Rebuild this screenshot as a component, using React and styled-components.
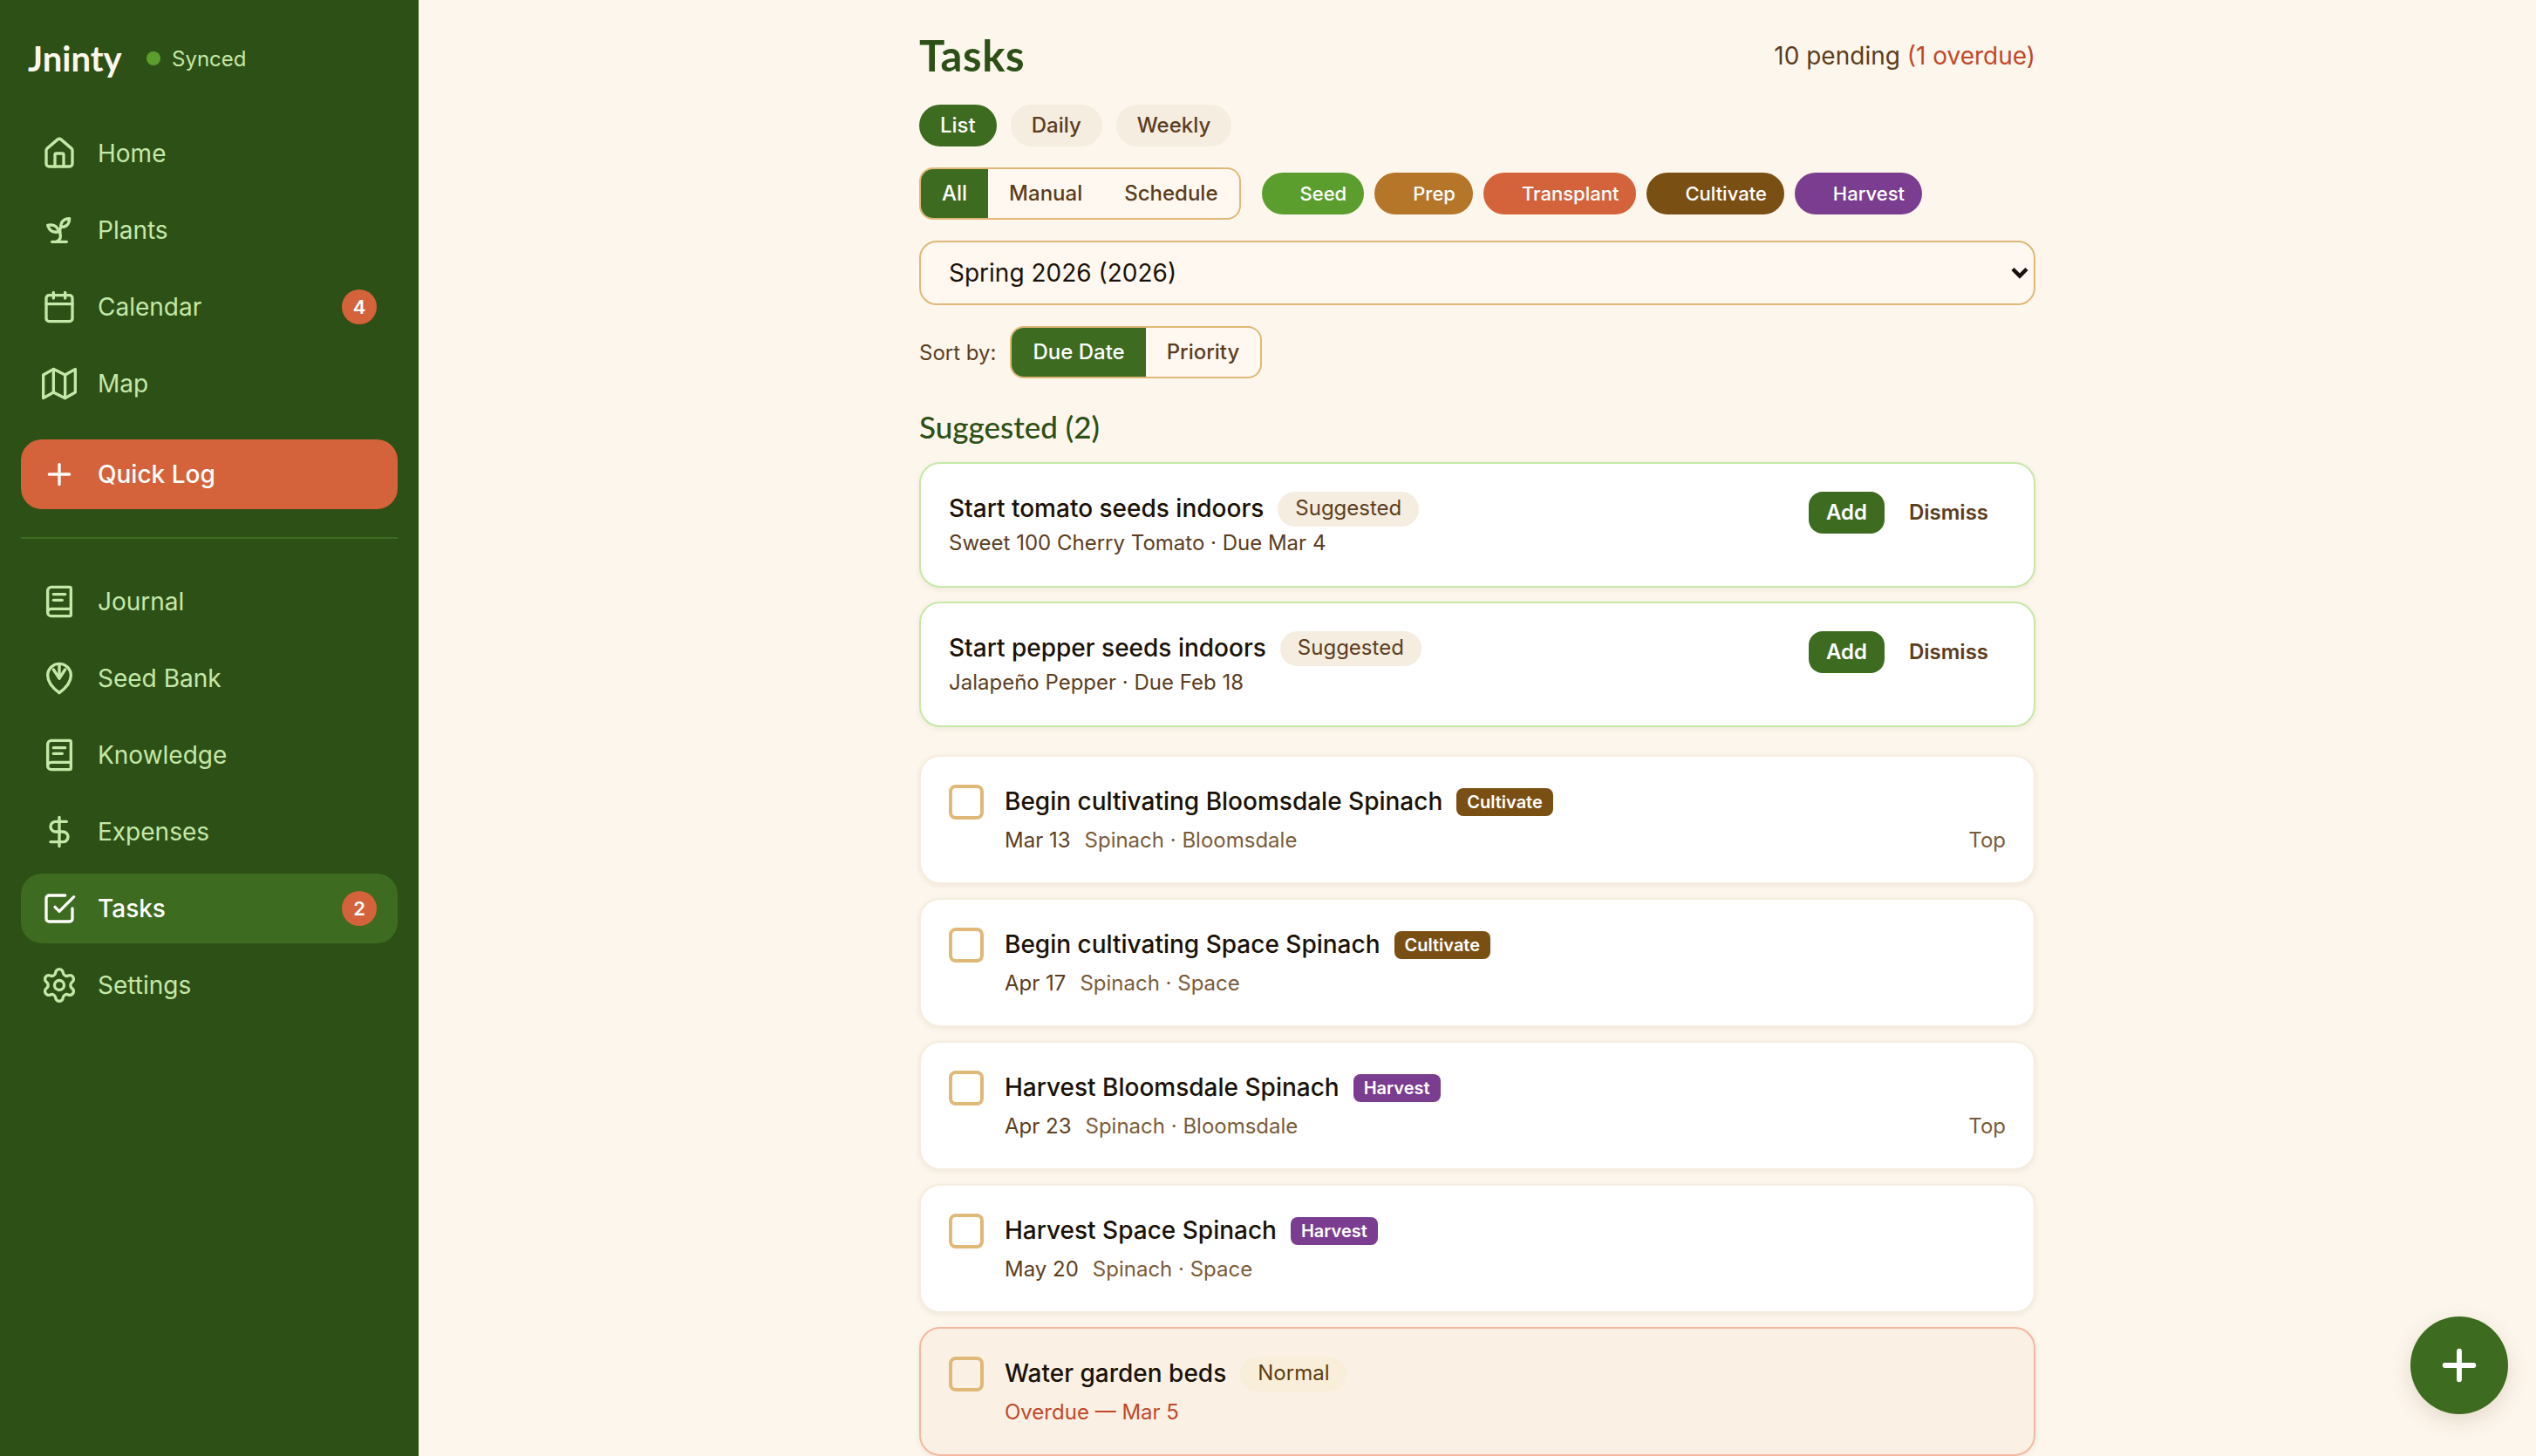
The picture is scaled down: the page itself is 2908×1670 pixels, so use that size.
import React from "react";
import styled, { createGlobalStyle } from "styled-components";
import { House, Calendar, Plus, DollarSign, Settings } from "lucide-react";

const Global = createGlobalStyle`
  html, body { margin: 0; padding: 0; height: 100%; overflow: hidden; }
  body { background: #fdf6ec; font-family: Inter, "Liberation Sans", sans-serif; color: #1a1208; }
  #root { height: 100%; }
  * { box-sizing: border-box; }
`;

const HEADING = `Lato, "Noto Sans", sans-serif`;

const Shell = styled.div`
  display: flex;
  height: 1670px;
  overflow: hidden;
`;
const Sidebar = styled.aside`
  width: 480px;
  flex: none;
  background: #2d5016;
  padding: 0 24px;
  display: flex;
  flex-direction: column;
`;
const Brand = styled.div`
  height: 136px;
  display: flex;
  align-items: center;
  padding: 0 0 2px 8px;
`;
const Logo = styled.div`
  font-family: ${HEADING};
  font-weight: 700;
  font-size: 40px;
  color: #fdf6ec;
  width: 136px;
`;
const SyncDot = styled.span`
  width: 16px;
  height: 16px;
  border-radius: 50%;
  background: #5c9e2e;
  margin-right: 13px;
`;
const SyncText = styled.span`
  font-size: 24px;
  color: #c5e8a8;
`;
const Nav = styled.nav`
  display: flex;
  flex-direction: column;
  gap: 8px;
`;
const NavItem = styled.a`
  height: 80px;
  border-radius: 24px;
  padding: 0 24px;
  display: flex;
  align-items: center;
  gap: 24px;
  font-size: 28px;
  font-weight: ${(p) => (p.$active ? 500 : 400)};
  color: ${(p) => (p.$active ? "#ffffff" : "#c5e8a8")};
  background: ${(p) => (p.$active ? "#3d6b1f" : "transparent")};
  svg { flex: none; }
`;
const QuickLog = styled(NavItem)`
  margin-top: 16px;
  background: #d4623a;
  color: #ffffff;
  font-weight: 500;
`;
const Label = styled.span`
  flex: 1;
`;
const Badge = styled.span`
  width: 40px;
  height: 40px;
  border-radius: 50%;
  background: #d4623a;
  color: #fff;
  font-size: 22px;
  font-weight: 600;
  display: flex;
  align-items: center;
  justify-content: center;
`;
const Divider = styled.hr`
  border: 0;
  height: 2px;
  background: #3d6b1f;
  margin: 32px 0;
`;
const Gear = styled(Settings)`
  margin: 0 -2px;
`;
const Main = styled.main`
  flex: 1;
  display: flex;
  justify-content: center;
  overflow: hidden;
`;
const Column = styled.div`
  width: 1280px;
  padding-top: 32px;
`;
const TitleRow = styled.header`
  display: flex;
  justify-content: space-between;
  align-items: center;
  height: 64px;
  margin-bottom: 24px;
`;
const Title = styled.h1`
  margin: 0 0 2px;
  font-family: ${HEADING};
  font-size: 49px;
  letter-spacing: 0.6px;
  font-weight: 700;
  color: #2d5016;
`;
const Pending = styled.div`
  font-size: 28px;
  color: #5c3d1e;
`;
const Overdue = styled.span`
  color: #c0492b;
`;
const ViewTabs = styled.div`
  display: flex;
  gap: 16px;
  margin-bottom: 24px;
`;
const ViewTab = styled.button`
  height: 48px;
  padding: 0 24px 2px;
  border: 0;
  border-radius: 24px;
  font: 500 24px Inter, sans-serif;
  background: ${(p) => (p.$active ? "#3d6b1f" : "#f5ede0")};
  color: ${(p) => (p.$active ? "#fff" : "#5c3d1e")};
`;
const FilterRow = styled.div`
  display: flex;
  align-items: center;
  gap: 24px;
  margin-bottom: 24px;
`;
const Segments = styled.div`
  display: flex;
  height: 60px;
  border: 2px solid #e0b878;
  border-radius: 16px;
  overflow: hidden;
  background: #fff8f0;
`;
const Segment = styled.button`
  padding: 0 24px 2px;
  border: 0;
  font: 500 24px Inter, sans-serif;
  background: ${(p) => (p.$active ? "#3d6b1f" : "transparent")};
  color: ${(p) => (p.$active ? "#fff" : "#5c3d1e")};
`;
const Stages = styled.div`
  display: flex;
  gap: 12px;
`;
const Stage = styled.button`
  height: 48px;
  padding: 0 20px;
  border: 0;
  border-radius: 24px;
  display: flex;
  align-items: center;
  gap: 12px;
  font: 500 22px Inter, sans-serif;
  color: #fff;
  background: ${(p) => p.$color};
`;
const StageDot = styled.span`
  width: 12px;
  height: 12px;
  border-radius: 50%;
  background: ${(p) => p.$color};
`;
const SelectWrap = styled.div`
  position: relative;
  margin-bottom: 24px;
`;
const SeasonSelect = styled.select`
  appearance: none;
  display: block;
  width: 100%;
  height: 74px;
  padding: 0 32px;
  border: 2px solid #e0b878;
  border-radius: 20px;
  background: #fff8f0;
  color: #1a1208;
  font: 400 28px Inter, sans-serif;
`;
const Chevron = styled.svg`
  position: absolute;
  right: 8px;
  top: 30px;
  pointer-events: none;
`;
const SortRow = styled.div`
  display: flex;
  align-items: center;
  gap: 16px;
  font-size: 24px;
  color: #5c3d1e;
  margin-bottom: 32px;
`;
const SectionTitle = styled.h2`
  margin: 0 0 16px;
  height: 48px;
  line-height: 46px;
  font-family: ${HEADING};
  font-weight: 500;
  font-size: 35px;
  color: #2d5016;
`;
const CardList = styled.div`
  display: flex;
  flex-direction: column;
  gap: 16px;
  margin-bottom: 32px;
`;
const Card = styled.div`
  display: flex;
  align-items: flex-start;
  gap: 24px;
  padding: 32px;
  border-radius: 24px;
  border: 2px solid ${(p) => p.$border || "#f5ede0"};
  background: ${(p) => p.$bg || "#ffffff"};
  box-shadow: 0 2px 6px rgba(92, 61, 30, 0.08);
`;
const CardBody = styled.div`
  flex: 1;
  min-width: 0;
`;
const TitleLine = styled.div`
  display: flex;
  align-items: center;
  gap: 16px;
  height: 40px;
`;
const CardTitle = styled.span`
  padding-bottom: 2px;
  font-size: 28px;
  font-weight: 500;
  color: #1a1208;
`;
const Chip = styled.span`
  height: 40px;
  line-height: 38px;
  padding: 0 20px;
  border-radius: 20px;
  font-size: 24px;
  background: ${(p) => p.$bg || "#f5ede0"};
  color: ${(p) => p.$color || "#5c3d1e"};
`;
const StageTag = styled.span`
  height: 32px;
  line-height: 32px;
  padding: 0 12px;
  border-radius: 8px;
  font-size: 20px;
  font-weight: 600;
  color: #fff;
  background: ${(p) => p.$color};
`;
const SuggestMeta = styled.div`
  margin-top: 4px;
  height: 32px;
  line-height: 30px;
  font-size: 24px;
  color: #5c3d1e;
`;
const Actions = styled.div`
  display: flex;
  gap: 8px;
`;
const AddButton = styled.button`
  height: 48px;
  padding: 0 20px 2px;
  border: 0;
  border-radius: 16px;
  background: #3d6b1f;
  color: #fff;
  font: 600 24px Inter, sans-serif;
`;
const DismissButton = styled.button`
  height: 48px;
  padding: 0 20px 2px;
  border: 0;
  background: transparent;
  color: #5c3d1e;
  font: 600 24px Inter, sans-serif;
`;
const Checkbox = styled.span`
  flex: none;
  width: 40px;
  height: 40px;
  border: 4px solid #e0b878;
  border-radius: 8px;
`;
const TaskMeta = styled.div`
  margin-top: 8px;
  height: 32px;
  padding-bottom: 2px;
  display: flex;
  align-items: center;
  gap: 16px;
  font-size: 24px;
  color: #5c3d1e;
`;
const Crop = styled.span`
  color: #7a5c3a;
`;
const Location = styled.span`
  margin-left: auto;
  color: #7a5c3a;
`;
const OverdueText = styled.span`
  color: #c0492b;
`;
const Fab = styled.button`
  position: fixed;
  right: 32px;
  bottom: 48px;
  width: 112px;
  height: 112px;
  border: 0;
  border-radius: 50%;
  background: #3d6b1f;
  color: #fff;
  display: flex;
  align-items: center;
  justify-content: center;
  box-shadow: 0 8px 24px rgba(92, 61, 30, 0.15);
`;

const Svg = ({ children }) => (
  <svg width="40" height="40" viewBox="0 0 24 24" fill="none" stroke="currentColor" strokeWidth="2" strokeLinecap="round" strokeLinejoin="round">
    {children}
  </svg>
);
const Sprout = () => (
  <Svg>
    <path d="M7 20h10" />
    <path d="M10 20c5.5-2.5.8-6.4 3-10" />
    <path d="M9.5 9.4c1.1.8 1.8 2.2 2.3 3.7-2 .4-3.5.4-4.8-.3-1.2-.6-2.3-1.9-3-4.2 2.8-.5 4.4 0 5.5.8z" />
    <path d="M14.1 6a7 7 0 0 0-1.1 4c1.9-.1 3.3-.6 4.3-1.4 1-1 1.6-2.3 1.7-4.6-2.7.1-4 1-4.9 2z" />
  </Svg>
);
const MapIcon = () => (
  <Svg>
    <polygon points="1 6 1 22 8 18 16 22 23 18 23 2 16 6 8 2 1 6" />
    <line x1="8" y1="2" x2="8" y2="18" />
    <line x1="16" y1="6" x2="16" y2="22" />
  </Svg>
);
const Book = () => (
  <Svg>
    <path d="M4 19.5v-15A2.5 2.5 0 0 1 6.5 2H19a1 1 0 0 1 1 1v18a1 1 0 0 1-1 1H6.5a2.5 2.5 0 0 1 0-5H20" />
    <path d="M8 7h8" />
    <path d="M8 11h6" />
  </Svg>
);
const Seed = () => (
  <Svg>
    <path d="M12 22C8 19 4 15 4 10a8 8 0 0 1 16 0c0 5-4 9-8 12z" />
    <path d="M12 2v10" />
    <path d="m8 6 4 6 4-6" />
  </Svg>
);
const Check = () => (
  <Svg>
    <polyline points="9 11 12 14 22 4" />
    <path d="M21 12v7a2 2 0 0 1-2 2H5a2 2 0 0 1-2-2V5a2 2 0 0 1 2-2h11" />
  </Svg>
);

const C = { Seed: "#5c9e2e", Prep: "#b5762a", Transplant: "#d4623a", Cultivate: "#7a4f14", Harvest: "#7b3d8f" };

const suggested = [
  { title: "Start tomato seeds indoors", meta: "Sweet 100 Cherry Tomato · Due Mar 4" },
  { title: "Start pepper seeds indoors", meta: "Jalapeño Pepper · Due Feb 18" },
];
const tasks = [
  { title: "Begin cultivating Bloomsdale Spinach", stage: "Cultivate", date: "Mar 13", crop: "Spinach · Bloomsdale", loc: "Top" },
  { title: "Begin cultivating Space Spinach", stage: "Cultivate", date: "Apr 17", crop: "Spinach · Space" },
  { title: "Harvest Bloomsdale Spinach", stage: "Harvest", date: "Apr 23", crop: "Spinach · Bloomsdale", loc: "Top" },
  { title: "Harvest Space Spinach", stage: "Harvest", date: "May 20", crop: "Spinach · Space" },
];

export default function App() {
  return (
    <Shell>
      <Global />
      <Sidebar>
        <Brand>
          <Logo>Jninty</Logo>
          <SyncDot />
          <SyncText>Synced</SyncText>
        </Brand>
        <Nav>
          <NavItem><House size={40} /><Label>Home</Label></NavItem>
          <NavItem><Sprout /><Label>Plants</Label></NavItem>
          <NavItem><Calendar size={40} /><Label>Calendar</Label><Badge>4</Badge></NavItem>
          <NavItem><MapIcon /><Label>Map</Label></NavItem>
          <QuickLog><Plus size={40} /><Label>Quick Log</Label></QuickLog>
        </Nav>
        <Divider />
        <Nav>
          <NavItem><Book /><Label>Journal</Label></NavItem>
          <NavItem><Seed /><Label>Seed Bank</Label></NavItem>
          <NavItem><Book /><Label>Knowledge</Label></NavItem>
          <NavItem><DollarSign size={40} /><Label>Expenses</Label></NavItem>
          <NavItem $active><Check /><Label>Tasks</Label><Badge>2</Badge></NavItem>
          <NavItem><Gear size={44} strokeWidth={1.82} /><Label>Settings</Label></NavItem>
        </Nav>
      </Sidebar>
      <Main>
        <Column>
          <TitleRow>
            <Title>Tasks</Title>
            <Pending>10 pending <Overdue>(1 overdue)</Overdue></Pending>
          </TitleRow>
          <ViewTabs>
            <ViewTab $active>List</ViewTab>
            <ViewTab>Daily</ViewTab>
            <ViewTab>Weekly</ViewTab>
          </ViewTabs>
          <FilterRow>
            <Segments>
              <Segment $active>All</Segment>
              <Segment>Manual</Segment>
              <Segment>Schedule</Segment>
            </Segments>
            <Stages>
              {Object.entries(C).map(([name, color]) => (
                <Stage key={name} $color={color}><StageDot $color={color} />{name}</Stage>
              ))}
            </Stages>
          </FilterRow>
          <SelectWrap>
            <SeasonSelect defaultValue="s">
              <option value="s">Spring 2026 (2026)</option>
            </SeasonSelect>
            <Chevron width="20" height="14" viewBox="0 0 20 14" fill="none" stroke="#1a1208" strokeWidth="4.5">
              <path d="M2 2.5 10 10.5 18 2.5" />
            </Chevron>
          </SelectWrap>
          <SortRow>
            Sort by:
            <Segments>
              <Segment $active>Due Date</Segment>
              <Segment>Priority</Segment>
            </Segments>
          </SortRow>
          <SectionTitle>Suggested (2)</SectionTitle>
          <CardList>
            {suggested.map((s) => (
              <Card key={s.title} $border="#c5e8a8">
                <CardBody>
                  <TitleLine>
                    <CardTitle>{s.title}</CardTitle>
                    <Chip>Suggested</Chip>
                  </TitleLine>
                  <SuggestMeta>{s.meta}</SuggestMeta>
                </CardBody>
                <Actions>
                  <AddButton>Add</AddButton>
                  <DismissButton>Dismiss</DismissButton>
                </Actions>
              </Card>
            ))}
          </CardList>
          <CardList>
            {tasks.map((t) => (
              <Card key={t.title}>
                <Checkbox />
                <CardBody>
                  <TitleLine>
                    <CardTitle>{t.title}</CardTitle>
                    <StageTag $color={C[t.stage]}>{t.stage}</StageTag>
                  </TitleLine>
                  <TaskMeta>
                    <span>{t.date}</span>
                    <Crop>{t.crop}</Crop>
                    {t.loc && <Location>{t.loc}</Location>}
                  </TaskMeta>
                </CardBody>
              </Card>
            ))}
            <Card $border="#f4b8a0" $bg="#fbf0e4">
              <Checkbox />
              <CardBody>
                <TitleLine>
                  <CardTitle>Water garden beds</CardTitle>
                  <Chip $bg="#f9eeda" $color="#5c3d10">Normal</Chip>
                </TitleLine>
                <TaskMeta><OverdueText>Overdue — Mar 5</OverdueText></TaskMeta>
              </CardBody>
            </Card>
          </CardList>
        </Column>
      </Main>
      <Fab><Plus size={56} strokeWidth={2.5} /></Fab>
    </Shell>
  );
}
